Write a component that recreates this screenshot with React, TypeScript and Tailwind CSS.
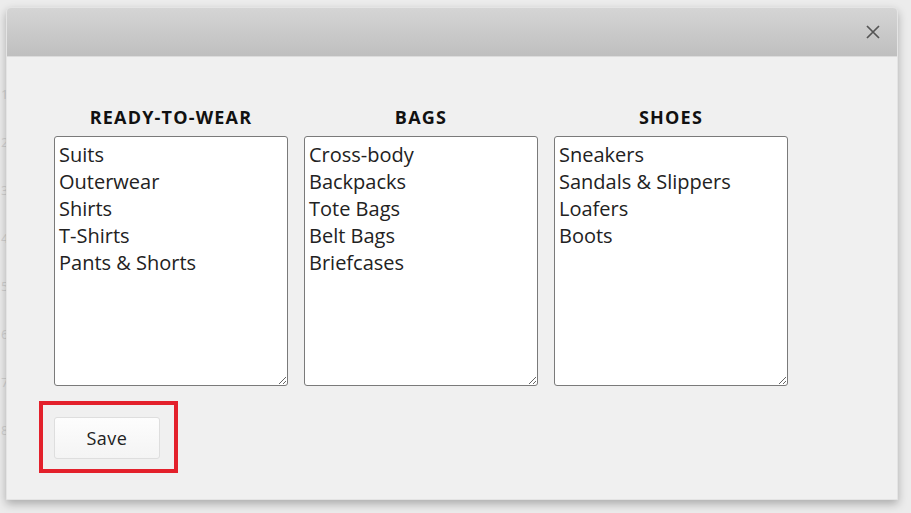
import { useState } from "react";

const columns = [
  { title: "READY-TO-WEAR", items: ["Suits", "Outerwear", "Shirts", "T-Shirts", "Pants & Shorts"] },
  { title: "BAGS", items: ["Cross-body", "Backpacks", "Tote Bags", "Belt Bags", "Briefcases"] },
  { title: "SHOES", items: ["Sneakers", "Sandals & Slippers", "Loafers", "Boots"] },
];

const rowNumbers = [1, 2, 3, 4, 5, 6, 7, 8];

function CategoryColumn({ title, items }: { title: string; items: string[] }) {
  const [value, setValue] = useState(items.join("\n"));
  return (
    <div className="flex w-[234px] flex-col items-center gap-[7px]">
      <h3 className="text-[18px] font-bold leading-[24px] tracking-[1.2px] text-[#111]">{title}</h3>
      <textarea
        value={value}
        onChange={(e) => setValue(e.target.value)}
        className="h-[250px] w-full rounded-[3px] border border-[#7a7a7a] bg-white px-[4px] pt-[4px] text-[20px] leading-[27px] text-[#222] outline-none"
        style={{ fontFamily: "'Open Sans', sans-serif" }}
      />
    </div>
  );
}

export default function App() {
  return (
    <div
      className="relative h-[513px] w-[911px] overflow-hidden bg-[#ececec]"
      style={{ fontFamily: "'Open Sans', 'Liberation Sans', sans-serif" }}
    >
      {/* page behind the dialog */}
      <div className="flex flex-col gap-[40px] pl-[1px] pt-[90px] text-[13px] text-[#d2d2d2]">
        {rowNumbers.map((n) => (
          <span key={n} className="leading-[8px]">{n}</span>
        ))}
      </div>

      {/* dialog */}
      <div className="absolute left-[6px] top-[7px] flex h-[493px] w-[892px] flex-col overflow-hidden rounded-t-[5px] border border-[#e4e4e4] bg-[#f0f0f0] shadow-[0_4px_10px_rgba(0,0,0,0.28)]">
        <div className="flex h-[49px] shrink-0 items-center justify-end border-b border-[#dcdcdc] bg-gradient-to-b from-[#d5d5d5] to-[#bfbfbf] pr-[14px]">
          <button className="flex h-[20px] w-[20px] items-center justify-center text-[#555]">
            <svg width="14" height="14" viewBox="0 0 14 14" fill="none" stroke="currentColor" strokeWidth="1.7">
              <path d="M1 1 L13 13 M13 1 L1 13" />
            </svg>
          </button>
        </div>

        <div className="flex flex-col pl-[47px] pt-[48px]">
          <div className="flex gap-[16px]">
            {columns.map((c) => (
              <CategoryColumn key={c.title} title={c.title} items={c.items} />
            ))}
          </div>

          <div className="relative mt-[31px] self-start">
            <button className="h-[42px] w-[106px] rounded-[3px] border border-[#dedede] bg-gradient-to-b from-[#fdfdfd] to-[#f4f4f4] pt-[1px] text-[18px] tracking-[0.5px] text-[#222]">
              Save
            </button>
            <div className="pointer-events-none absolute -bottom-[14px] -left-[15px] -right-[18px] -top-[16px] border-4 border-[#e3202b]" />
          </div>
        </div>
      </div>
    </div>
  );
}
